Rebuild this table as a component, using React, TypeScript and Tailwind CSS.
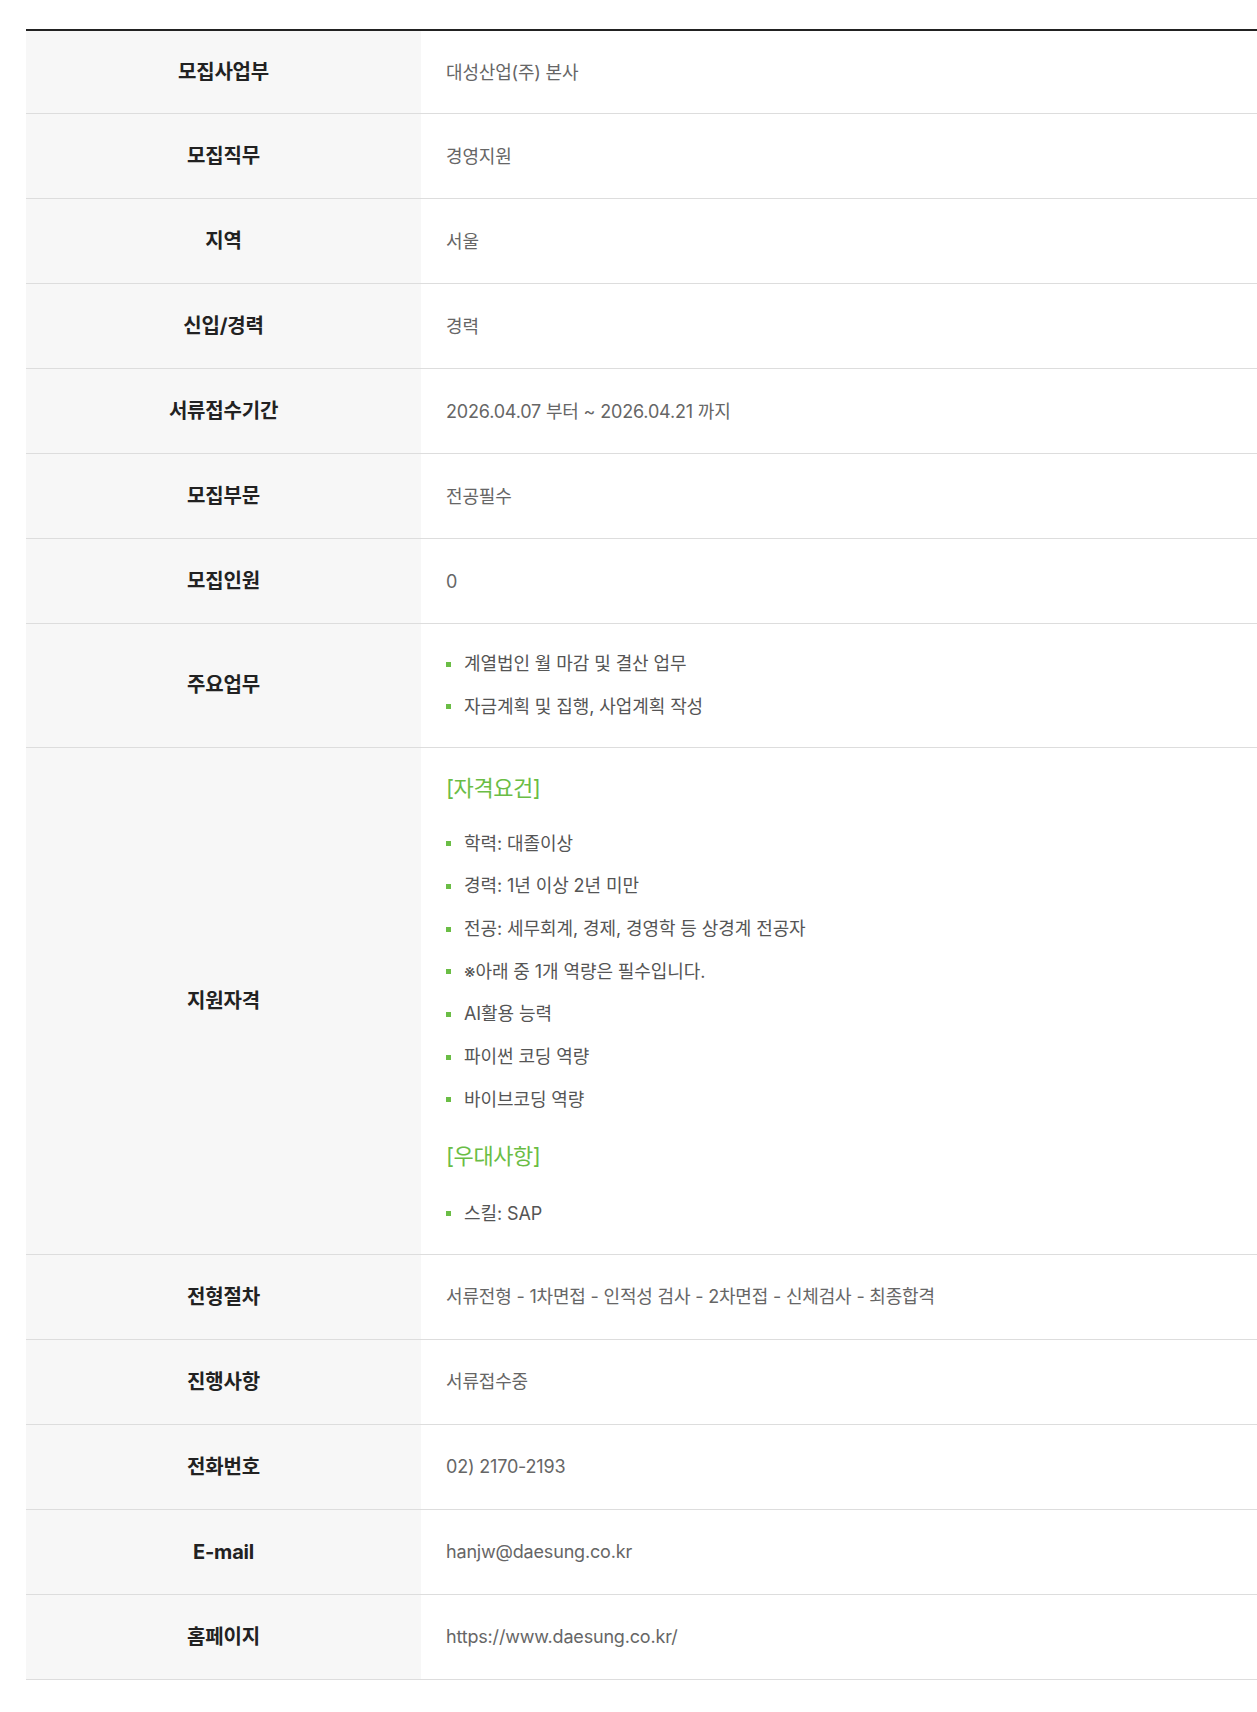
const font = "font-['Inter','Noto_Sans_CJK_KR',sans-serif]";

type Row = { label: string; value?: string };

const topRows: Row[] = [
  { label: "모집사업부", value: "대성산업(주) 본사" },
  { label: "모집직무", value: "경영지원" },
  { label: "지역", value: "서울" },
  { label: "신입/경력", value: "경력" },
  { label: "서류접수기간", value: "2026.04.07 부터 ~ 2026.04.21 까지" },
  { label: "모집부문", value: "전공필수" },
  { label: "모집인원", value: "0" },
];

const bottomRows: Row[] = [
  { label: "전형절차", value: "서류전형 - 1차면접 - 인적성 검사 - 2차면접 - 신체검사 - 최종합격" },
  { label: "진행사항", value: "서류접수중" },
  { label: "전화번호", value: "02) 2170-2193" },
  { label: "E-mail", value: "hanjw@daesung.co.kr" },
  { label: "홈페이지", value: "https://www.daesung.co.kr/" },
];

function Label({ children }: { children: React.ReactNode }) {
  return (
    <div className="w-[395px] shrink-0 bg-[#f7f7f7] flex items-center justify-center text-[20px] font-bold text-[#222] tracking-[-0.01em]">
      {children}
    </div>
  );
}

function SimpleRow({ label, value, first }: Row & { first?: boolean }) {
  return (
    <div className={"flex border-b border-[#ddd] " + (first ? "min-h-[83px]" : "min-h-[85px]")}>
      <Label>{label}</Label>
      <div className="flex-1 flex items-center pl-[25px] text-[18px] text-[#666] tracking-[-0.01em]">
        {value}
      </div>
    </div>
  );
}

function Item({ children }: { children: React.ReactNode }) {
  return (
    <li className="flex items-center leading-[30px] text-[18px] text-[#555] tracking-[-0.005em]">
      <span className="w-[5px] h-[5px] bg-[#6abd45] mr-[13px] shrink-0" />
      {children}
    </li>
  );
}

function Heading({ children, className }: { children: React.ReactNode; className?: string }) {
  return (
    <h3 className={"text-[22px] leading-[30px] text-[#6abd45] tracking-[-0.02em] font-normal " + (className ?? "")}>
      {children}
    </h3>
  );
}

export default function App() {
  return (
    <div className={"bg-white min-h-[1712px] pt-[29px] pl-[26px] " + font}>
      <div className="border-t-2 border-[#222]">
        {topRows.map((r, i) => (
          <SimpleRow key={r.label} {...r} first={i === 0} />
        ))}

        <div className="flex border-b border-[#ddd]">
          <Label>주요업무</Label>
          <div className="flex-1 pl-[25px] py-[25px]">
            <ul className="flex flex-col gap-[12.7px]">
              <Item>계열법인 월 마감 및 결산 업무</Item>
              <Item>자금계획 및 집행, 사업계획 작성</Item>
            </ul>
          </div>
        </div>

        <div className="flex border-b border-[#ddd]">
          <Label>지원자격</Label>
          <div className="flex-1 pl-[25px] py-[25px]">
            <Heading className="mb-[26px]">[자격요건]</Heading>
            <ul className="flex flex-col gap-[12.7px]">
              <Item>학력: 대졸이상</Item>
              <Item>경력: 1년 이상 2년 미만</Item>
              <Item>전공: 세무회계, 경제, 경영학 등 상경계 전공자</Item>
              <Item>※아래 중 1개 역량은 필수입니다.</Item>
              <Item>AI활용 능력</Item>
              <Item>파이썬 코딩 역량</Item>
              <Item>바이브코딩 역량</Item>
            </ul>
            <Heading className="mt-[26px] mb-[28px]">[우대사항]</Heading>
            <ul className="flex flex-col gap-[12.7px]">
              <Item>스킬: SAP</Item>
            </ul>
          </div>
        </div>

        {bottomRows.map((r) => (
          <SimpleRow key={r.label} {...r} />
        ))}
      </div>
    </div>
  );
}
